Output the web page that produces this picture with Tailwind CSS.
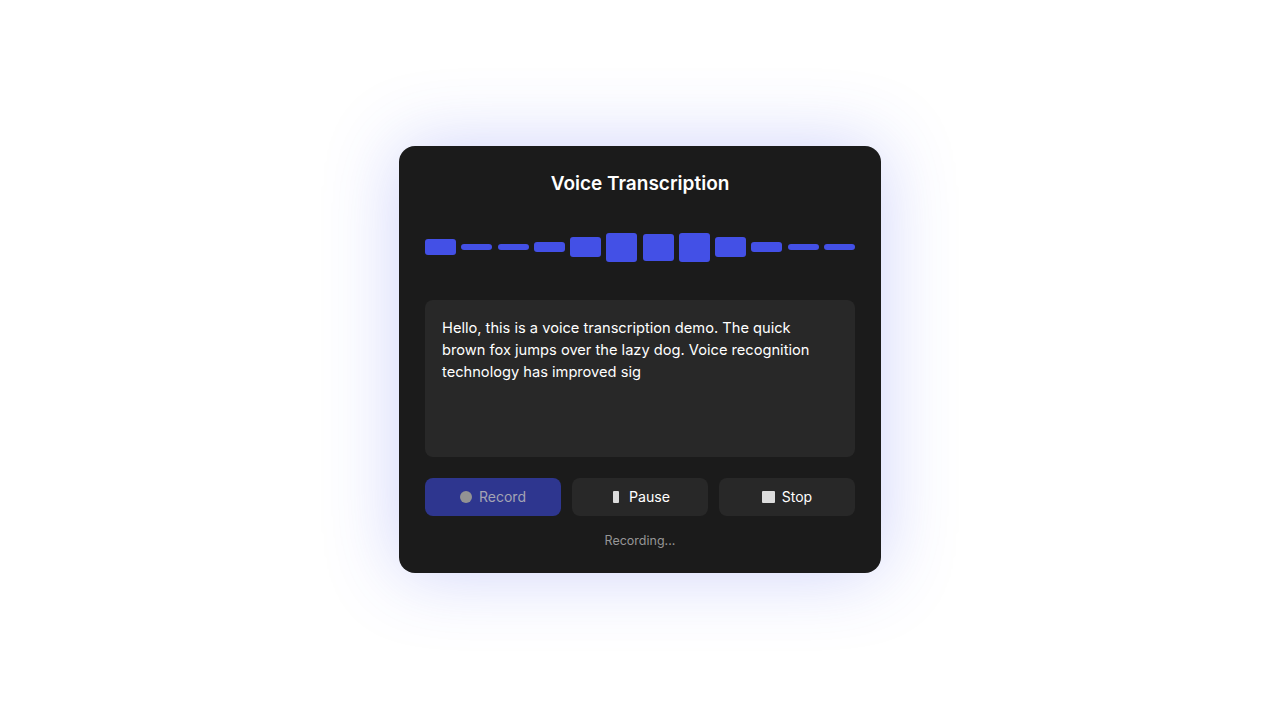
<!DOCTYPE html>
<html lang="en">
  <head>
    <meta charset="UTF-8" />
    <meta name="viewport" content="width=device-width, initial-scale=1.0" />
    <script src="https://cdn.jsdelivr.net/npm/@tailwindcss/browser@4"></script>
    <title>Voice Transcription</title>
  </head>
  <body class="bg-white font-['Inter',sans-serif]">
    <div class="flex items-center justify-center h-screen pb-[1px]">
      <div class="w-[482px] h-[427px] rounded-2xl bg-[#1b1b1b] px-[26px] pt-[26px] shadow-[0_0_75px_rgba(67,82,235,0.26)]">
        <h1 class="text-center text-[19px] leading-[24px] font-semibold text-white">Voice Transcription</h1>

        <!-- waveform -->
        <div class="flex items-center justify-between h-[32px] mt-[35px]">
          <div class="w-[31px] h-[16px] rounded-[3px] bg-[#4350e6]"></div>
          <div class="w-[31px] h-[5.4px] rounded-[3px] bg-[#4350e6]"></div>
          <div class="w-[31px] h-[5.4px] rounded-[3px] bg-[#4350e6]"></div>
          <div class="w-[31px] h-[9.4px] rounded-[3px] bg-[#4350e6]"></div>
          <div class="w-[31px] h-[20.3px] rounded-[3px] bg-[#4350e6]"></div>
          <div class="w-[31px] h-[29px] rounded-[3px] bg-[#4350e6]"></div>
          <div class="w-[31px] h-[27px] rounded-[3px] bg-[#4350e6]"></div>
          <div class="w-[31px] h-[29px] rounded-[3px] bg-[#4350e6]"></div>
          <div class="w-[31px] h-[20.3px] rounded-[3px] bg-[#4350e6]"></div>
          <div class="w-[31px] h-[9.4px] rounded-[3px] bg-[#4350e6]"></div>
          <div class="w-[31px] h-[5.4px] rounded-[3px] bg-[#4350e6]"></div>
          <div class="w-[31px] h-[5.4px] rounded-[3px] bg-[#4350e6]"></div>
        </div>

        <!-- transcript -->
        <div class="mt-[37px] h-[157px] rounded-lg bg-[#282828] pl-[17px] pr-[24px] py-[17px] text-[14.65px] leading-[22px] text-white">
          Hello, this is a voice transcription demo. The quick brown fox jumps over the lazy dog. Voice recognition technology has improved sig
        </div>

        <!-- controls -->
        <div class="grid grid-cols-3 gap-[11px] mt-[21px]">
          <button class="flex items-center justify-center gap-[7px] h-[38px] pb-[1px] rounded-lg bg-[#2e368f] text-[14px] text-[#a4a4b4]">
            <span class="w-[12px] h-[12px] mt-[1px] rounded-full bg-[#939393]"></span>Record
          </button>
          <button class="flex items-center justify-center gap-[10px] h-[38px] pb-[1px] pl-[3px] rounded-lg bg-[#282828] text-[14.2px] text-white">
            <span class="w-[6px] h-[12px] mt-[1px] rounded-[1px] bg-[#dcdcdc]"></span>Pause
          </button>
          <button class="flex items-center justify-center gap-[7px] h-[38px] pb-[1px] rounded-lg bg-[#282828] text-[14px] text-white">
            <span class="w-[13px] h-[12px] mt-[1px] rounded-[1px] bg-[#dcdcdc]"></span>Stop
          </button>
        </div>

        <p class="mt-[16px] text-center text-[12.5px] leading-[18px] text-[#969696]">Recording...</p>
      </div>
    </div>
  </body>
</html>
